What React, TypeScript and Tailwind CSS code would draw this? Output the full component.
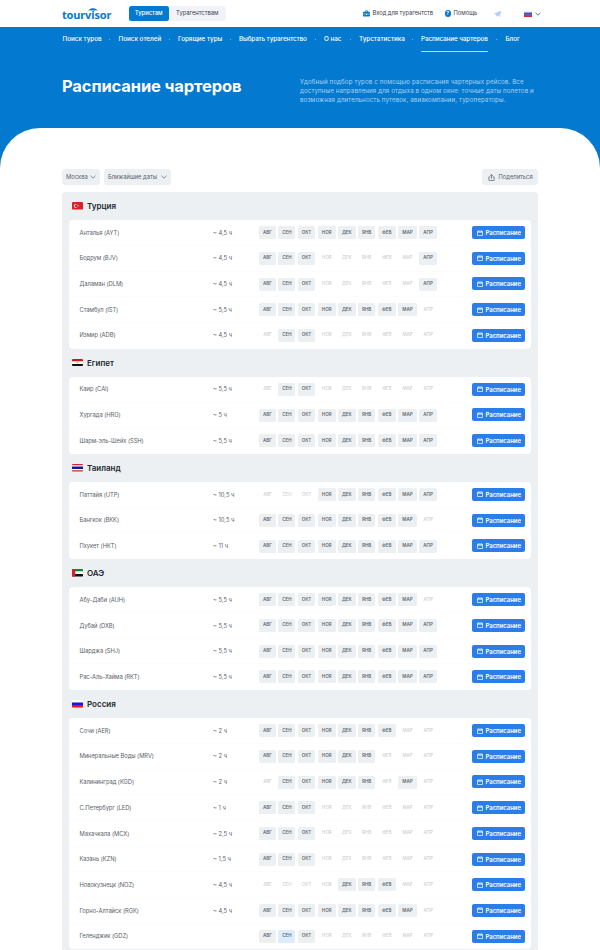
import { clsx } from 'clsx';

import type { ReactNode } from 'react';

const MONTHS = [
    { label: 'АВГ', width: 'w-[17px]' },
    { label: 'СЕН', width: 'w-[17px]' },
    { label: 'ОКТ', width: 'w-[17.5px]' },
    { label: 'НОЯ', width: 'w-[18px]' },
    { label: 'ДЕК', width: 'w-[17.5px]' },
    { label: 'ЯНВ', width: 'w-[17.5px]' },
    { label: 'ФЕВ', width: 'w-[18px]' },
    { label: 'МАР', width: 'w-[18.5px]' },
    { label: 'АПР', width: 'w-[18px]' },
];

type City = {
    name: string;
    hours?: string;
    // one flag per month, from August to April
    months: string;
    hovered?: number;
};

type Country = {
    name: string;
    flag: ReactNode;
    cities: City[];
};

const RussiaFlag = () => (
    <svg viewBox="0 0 12 9" preserveAspectRatio="none" className="h-full w-full">
        <path fill="#fff" d="M0 0h12v3H0z" />
        <path fill="#1a12e0" d="M0 3h12v3H0z" />
        <path fill="#e8112d" d="M0 6h12v3H0z" />
    </svg>
);

const TurkeyFlag = () => (
    <svg viewBox="0 0 12 8" preserveAspectRatio="none" className="h-full w-full">
        <path fill="#e01f26" d="M0 0h12v8H0z" />
        <circle cx="4" cy="4" r="2" fill="#fff" />
        <circle cx="4.6" cy="4" r="1.6" fill="#e01f26" />
        <circle cx="6.7" cy="4" r="0.6" fill="#fff" />
    </svg>
);

const EgyptFlag = () => (
    <svg viewBox="0 0 12 9" preserveAspectRatio="none" className="h-full w-full">
        <path fill="#d3141f" d="M0 0h12v3H0z" />
        <path fill="#fff" d="M0 3h12v3H0z" />
        <path fill="#111" d="M0 6h12v3H0z" />
        <circle cx="6" cy="4.5" r="1" fill="#dcb044" />
    </svg>
);

const ThailandFlag = () => (
    <svg viewBox="0 0 12 9" preserveAspectRatio="none" className="h-full w-full">
        <path fill="#d6203a" d="M0 0h12v9H0z" />
        <path fill="#fff" d="M0 1.5h12v6H0z" />
        <path fill="#1b1591" d="M0 3h12v3H0z" />
    </svg>
);

const EmiratesFlag = () => (
    <svg viewBox="0 0 12 9" preserveAspectRatio="none" className="h-full w-full">
        <path fill="#0a8a2c" d="M0 0h12v3H0z" />
        <path fill="#fff" d="M0 3h12v3H0z" />
        <path fill="#111" d="M0 6h12v3H0z" />
        <path fill="#d3202b" d="M0 0h3.6v9H0z" />
    </svg>
);

const COUNTRIES: Country[] = [
    {
        name: 'Турция',
        flag: <TurkeyFlag />,
        cities: [
            { name: 'Анталья (AYT)', hours: '~ 4,5 ч', months: '111111111' },
            { name: 'Бодрум (BJV)', hours: '~ 4,5 ч', months: '111000001' },
            { name: 'Даламан (DLM)', hours: '~ 4,5 ч', months: '111000001' },
            { name: 'Стамбул (IST)', hours: '~ 5,5 ч', months: '111111110' },
            { name: 'Измир (ADB)', hours: '~ 4,5 ч', months: '011000000' },
        ],
    },
    {
        name: 'Египет',
        flag: <EgyptFlag />,
        cities: [
            { name: 'Каир (CAI)', hours: '~ 5,5 ч', months: '011000000' },
            { name: 'Хургада (HRG)', hours: '~ 5 ч', months: '111111111' },
            { name: 'Шарм-эль-Шейх (SSH)', hours: '~ 5,5 ч', months: '111111111' },
        ],
    },
    {
        name: 'Таиланд',
        flag: <ThailandFlag />,
        cities: [
            { name: 'Паттайя (UTP)', hours: '~ 10,5 ч', months: '000111111' },
            { name: 'Бангкок (BKK)', hours: '~ 10,5 ч', months: '111111110' },
            { name: 'Пхукет (HKT)', hours: '~ 11 ч', months: '111111111' },
        ],
    },
    {
        name: 'ОАЭ',
        flag: <EmiratesFlag />,
        cities: [
            { name: 'Абу-Даби (AUH)', hours: '~ 5,5 ч', months: '111111110' },
            { name: 'Дубай (DXB)', hours: '~ 5,5 ч', months: '111111111' },
            { name: 'Шарджа (SHJ)', hours: '~ 5,5 ч', months: '111111111' },
            { name: 'Рас-Аль-Хайма (RKT)', hours: '~ 5,5 ч', months: '111111111' },
        ],
    },
    {
        name: 'Россия',
        flag: <RussiaFlag />,
        cities: [
            { name: 'Сочи (AER)', hours: '~ 2 ч', months: '111111100' },
            { name: 'Минеральные Воды (MRV)', hours: '~ 2 ч', months: '111111000' },
            { name: 'Калининград (KGD)', hours: '~ 2 ч', months: '011111010' },
            { name: 'С.Петербург (LED)', hours: '~ 1 ч', months: '111000000' },
            { name: 'Махачкала (MCX)', hours: '~ 2,5 ч', months: '111000000' },
            { name: 'Казань (KZN)', hours: '~ 1,5 ч', months: '111000000' },
            { name: 'Новокузнецк (NOZ)', hours: '~ 4,5 ч', months: '000011100' },
            { name: 'Горно-Алтайск (RGK)', hours: '~ 4,5 ч', months: '111111110' },
            { name: 'Геленджик (GDZ)', months: '111000000', hovered: 1 },
        ],
    },
];

const NAV = [
    { label: 'Поиск туров', width: 'w-[38px]' },
    { label: 'Поиск отелей', width: 'w-[41.5px]' },
    { label: 'Горящие туры', width: 'w-[43px]' },
    { label: 'Выбрать турагентство', width: 'w-[67px]' },
    { label: 'О нас', width: 'w-[17px]' },
    { label: 'Турстатистика', width: 'w-[44px]' },
    { label: 'Расписание чартеров', width: 'w-[66.5px]', active: true },
    { label: 'Блог', width: 'w-[15px]' },
];

const Chevron = ({ className }: { className?: string }) => (
    <svg viewBox="0 0 6 4" className={clsx('h-1 w-1.5 shrink-0', className)} fill="none" stroke="currentColor" strokeWidth="0.7">
        <path d="M0.5 0.8 3 3.2 5.5 0.8" />
    </svg>
);

const Logo = () => (
    <div className="relative flex h-[27px] w-[50px] items-center pt-[3.5px] text-[#0878cf]">
        <svg viewBox="0 0 10 5" className="absolute top-[7.5px] left-[26px] h-[5px] w-[10px]" fill="currentColor">
            <path d="M0.3 3C1.2 0.8 3 0 5 0.2 7.2 0.1 9 1.2 9.8 3 8.6 2.1 7.4 2 6.4 2.7L5.3 2 5.8 4.5H5L4.5 2 3.4 2.8C2.6 2.1 1.4 2.2 0.3 3Z" />
        </svg>
        <span className="font-['Noto_Sans','Open_Sans',sans-serif] text-[11px] font-bold tracking-[-0.150px]">tourvisor</span>
    </div>
);

const Header = () => (
    <header className="flex h-[27px] items-center bg-white pl-[62px] text-[5.8px] whitespace-nowrap text-[#3b4350]">
        <Logo />
        <div className="ml-[17px] flex h-[15px] w-[97px] rounded-[3px] bg-[#f1f3f8]">
            <span className="flex w-[39.5px] items-center justify-center rounded-[2.5px] bg-[#0479d0] font-medium text-white">Туристам</span>
            <span className="flex flex-1 items-center justify-center">Турагентствам</span>
        </div>
        <div className="ml-[136.5px] flex items-center">
            <svg viewBox="0 0 12 12" className="h-[7px] w-[7px]" fill="#0878cf">
                <path d="M4 1h4l.8 2H11a1 1 0 0 1 1 1v2.6H0V4a1 1 0 0 1 1-1h2.200L4 1Zm.8 1L4.400 3h3.200L7.200 2ZM0 7.400h5v1.200h2V7.400h5V10a1 1 0 0 1-1 1H1a1 1 0 0 1-1-1Z" />
            </svg>
            <span className="ml-[3px] w-[60px] tracking-[-0.050px]">Вход для турагентств</span>
            <span className="ml-[12px] flex h-[6.5px] w-[6.5px] items-center justify-center rounded-full bg-[#0878cf] text-[5px] font-bold text-white">?</span>
            <span className="ml-[2.5px] w-[24px]">Помощь</span>
            <svg viewBox="0 0 14 12" className="ml-[16.5px] h-[6px] w-[7px]" fill="#c3dcfb" stroke="#7fb2f2" strokeWidth="0.8">
                <path d="M1 5.500 13 1 11 11 7 8 5.500 10.500 5 7Z" />
                <path d="M5 7 13 1 7 8" />
            </svg>
            <span className="ml-[22.5px] flex h-[6px] w-[8px] border-t border-[#eee]">
                <svg viewBox="0 0 8 5" preserveAspectRatio="none" className="h-full w-full">
                    <path fill="#1f55c4" d="M0 0.500h8v2.300H0z" />
                    <path fill="#dc2a3c" d="M0 2.800h8v2.200H0z" />
                </svg>
            </span>
            <Chevron className="ml-[3px]" />
        </div>
    </header>
);

const Nav = () => (
    <nav className="flex h-[26px] pl-[62.5px] text-[6.3px] font-medium text-white">
        {NAV.map((item, i) => (
            <div key={item.label} className="flex h-full">
                {i > 0 && (
                    <span className="flex h-[25px] w-[18px] items-center justify-center">
                        <span className="h-px w-px rounded-full bg-[#8cc4ee]" />
                    </span>
                )}
                <span
                    className={clsx(
                        'flex h-[25px] items-center border-b pt-[1px] whitespace-nowrap',
                        item.width,
                        item.active ? 'border-[#b7dcf7] tracking-[-0.070px]' : 'border-transparent',
                        i === 3 && 'tracking-[-0.120px]'
                    )}
                >
                    {item.label}
                </span>
            </div>
        ))}
    </nav>
);

const Hero = () => (
    <section className="flex h-[75px] pl-[62px]">
        <h1 className="w-[238px] pt-[22px] text-[16.5px] leading-[22px] font-bold tracking-[-0.120px] text-white">Расписание чартеров</h1>
        <p className="pt-[23.5px] text-[6.200px] leading-[9.1px] tracking-[0.100px] whitespace-nowrap text-[#a9d2f2]">
            Удобный подбор туров с помощью расписания чартерных рейсов. Все
            <br />
            доступные направления для отдыха в одном окне: точные даты полетов и
            <br />
            возможная длительность путевок, авиакомпании, туроператоры.
        </p>
    </section>
);

const Filters = () => (
    <div className="flex h-4 gap-[4px] text-[5.800px] text-[#59626b]">
        <div className="flex w-[38px] items-center justify-between rounded-[3px] bg-[#edf0f3] px-[4px]">
            Москва
            <Chevron />
        </div>
        <div className="flex w-[66.500px] items-center justify-between rounded-[3px] bg-[#edf0f3] px-[4px]">
            Ближайшие даты
            <Chevron />
        </div>
        <div className="ml-auto flex w-[56px] items-center rounded-[3px] bg-[#edf0f3] pl-[6px]">
            <svg viewBox="0 0 12 12" className="mr-[3.500px] h-[7px] w-[7px]" fill="none" stroke="currentColor" strokeWidth="1.200">
                <path d="M4 5H1.500v6h9V5H8M6 8V1M3.800 3 6 0.900 8.200 3" />
            </svg>
            Поделиться
        </div>
    </div>
);

const CityRow = ({ city }: { city: City }) => (
    <div className="flex h-[25.7px] items-center border-b border-[#fcfcfc] pl-[10.500px] whitespace-nowrap text-[#5b6268] last:border-transparent">
        <span className="w-[133.500px] pt-[1px] text-[5.800px] tracking-[-0.050px]">{city.name}</span>
        <span className="w-[46px] pt-[1px] text-[5.800px]">{city.hours}</span>
        <div className="flex gap-[2.400px] pt-[0.500px]">
            {MONTHS.map((month, i) => (
                <span
                    key={month.label}
                    className={clsx(
                        'flex h-[13px] items-center justify-center rounded-[1.500px] pt-[0.500px] text-[4.500px]',
                        month.width,
                        city.months[i] === '0' && 'text-[#c2c6ca]',
                        city.months[i] === '1' && 'font-semibold text-[#626a71]',
                        city.months[i] === '1' && (city.hovered === i ? 'bg-[#dceefd]' : 'bg-[#edf0f2]')
                    )}
                >
                    {month.label}
                </span>
            ))}
        </div>
        <button className="mr-[6px] ml-auto flex h-[13px] w-[53px] items-center rounded-[2px] bg-[#2b7de9] pl-[5px] text-[6px] font-semibold tracking-[-0.050px] text-white">
            <svg viewBox="0 0 12 12" className="mr-[2.500px] h-[6px] w-[6px]" fill="none" stroke="currentColor" strokeWidth="1.400">
                <path d="M1 2.500h10v8.500H1ZM1 4.500h10M3.500 0.500v3M8.500 0.500v3" />
            </svg>
            Расписание
        </button>
    </div>
);

const CountrySection = ({ country }: { country: Country }) => (
    <section>
        <h2 className="flex h-[28.200px] items-center pl-[3px] text-[8px] font-semibold text-[#22272c]">
            <span className="mr-[4px] flex h-[7.500px] w-[11px] overflow-hidden rounded-[1px]">{country.flag}</span>
            {country.name}
        </h2>
        <div className="rounded-[4px] bg-white">
            {country.cities.map((city) => (
                <CityRow key={city.name} city={city} />
            ))}
        </div>
    </section>
);

const App = () => {
    return (
        <div className="h-[950px] w-[600px] overflow-hidden bg-[#0479d0] font-['Inter','Noto_Sans',sans-serif]">
            <Header />
            <Nav />
            <Hero />
            <main className="h-[822px] rounded-t-[40px] bg-white px-[62px] pt-[41px]">
                <Filters />
                <div className="mt-[7px] h-[780px] rounded-[4px] bg-[#ecf0f3] px-[7px]">
                    {COUNTRIES.map((country) => (
                        <CountrySection key={country.name} country={country} />
                    ))}
                </div>
            </main>
        </div>
    );
};

export default App;
